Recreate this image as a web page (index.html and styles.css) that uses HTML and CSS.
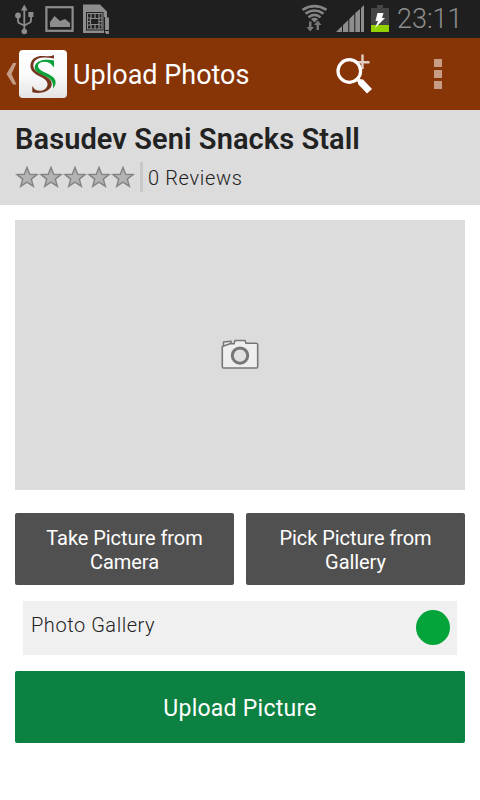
FILE: index.html
```
<!DOCTYPE html>
<html lang="en">
<head>
<meta charset="utf-8">
<title>Upload Photos</title>
<link rel="stylesheet" href="styles.css">
</head>
<body>
<div class="status">
  <svg class="status-left" width="120" height="38" viewBox="0 0 120 38">
    <g fill="none" stroke="#8d8d8d" stroke-width="1.8">
      <path d="M24.3 9V31M18 17V20.5Q18 23 20 23.5L24.3 25.5M31 16V20Q31 22.500 29 23L24.3 25.5"/>
      <rect x="46.4" y="7.200" width="26.200" height="23.600" stroke-width="2.2"/>
    </g>
    <g fill="#8d8d8d">
      <path d="M24.3 4.5L27.7 10.5H20.9z"/>
      <circle cx="18" cy="15.4" r="2.9"/>
      <rect x="28.400" y="12" width="5" height="5"/>
      <circle cx="24.3" cy="31.5" r="2.8"/>
      <path d="M50 27V22L54.5 16L60 21L65 19L70 23V27z"/>
      <path fill-rule="evenodd" d="M83 4.5H100L107 11.5V33H83zM86 12V30.5H103.500V12z"/>
      <path d="M106 17.500H109V30H106zM106 31H109V34H106z"/>
    </g>
    <g fill="none" stroke="#8d8d8d" stroke-width="1.2">
      <path d="M87.500 13.500H102V29H87.500zM90.500 18.500H99V24.500H90.500zM87.500 18H90.500M87.500 21.500H90.500M87.500 25H90.500M99 18H102M99 21.500H102M99 25H102M91 13.500V18M95 13.500V18M99 13.500V18M91 25V29M95 25V29M99 25V29"/>
    </g>
    <path d="M104.500 17V33M104.500 30.500H110" stroke="#1f1f1f" stroke-width="1"/>
  </svg>
  <svg class="status-right" width="92" height="38" viewBox="300 0 92 38">
    <g fill="none" stroke="#858585" stroke-width="2.6">
      <path d="M302.500 9.800Q314.500 2.500 326.500 9.800M305.500 13.600Q314.500 7.500 323.500 13.600M308.500 17.200Q314.500 12.500 320.500 17.200"/>
    </g>
    <path d="M311 19Q314.500 16.500 318 19L314.500 22.500z" fill="#858585"/>
    <path d="M309 21.500H311.500V27H314L310.200 31.500L306.500 27H309zM316.500 30H319V25H321.500L317.800 20.500L314 25H316.500z" fill="#777"/>
    <path d="M336 32L342 26V32zM343 25L348.300 20V32H343zM349.300 19L354.300 14V32H349.300zM355.300 13L360 9V32H355.300zM361 8L364 5V32H361z" fill="#8d8d8d"/>
    <path d="M377 5H383V8H389V32H371V8H377z" fill="#454545"/>
    <rect x="371" y="25" width="18" height="7" fill="#94d100"/>
    <path d="M377.500 13H383.500L382 18H385L375 28L378 21H375.500z" fill="#fff"/>
  </svg>
  <span class="clock">23:11</span>
</div>
<header class="bar">
  <svg class="back" width="11" height="24" viewBox="0 0 11 24"><path d="M7 1H10.500L5.500 12L10.500 22.500H7L0.500 12z" fill="#c49c84"/></svg>
  <svg class="logo" width="48" height="48" viewBox="0 0 48 48">
    <defs><linearGradient id="tile" x1="0" y1="0" x2="0" y2="1"><stop offset="0" stop-color="#fff"/><stop offset=".5" stop-color="#fbfbfb"/><stop offset="1" stop-color="#e4e4e4"/></linearGradient></defs>
    <rect width="48" height="48" rx="4" fill="url(#tile)"/>
    <path d="M35 5V8.500Q30 7.500 25 7.500C17 7.500 13.500 12 14.500 17C15.500 21 19 22.500 23 24.500C30 27.500 34 31 32.500 36C30 42 21 44 13.300 42.300V36L16 39.500C21 42.500 27.500 40 28.500 35C29 31 25 28.500 21 26.500C14 23 11 20 11.500 14.500C12.500 8 18 5.500 25 6Q31 7 35 5z" fill="#75361f"/>
    <path d="M35 10.500V17.500L32 14C28 10.500 20.500 11 19 15C18.500 19 23 21 27 23C35 26.500 38 30 36 35.500L34 38.500C35 31 31 28 24.500 25.500C18 22.500 14.500 20 16 15.500C18 10 27 8.500 35 10.500z" fill="#08a238"/>
  </svg>
  <h1 class="title">Upload Photos</h1>
  <svg class="search" width="38" height="40" viewBox="335 54 38 40">
    <g fill="none" stroke="#fff">
      <path d="M362.500 54.500V69M356 62.200H369.500" stroke="#e2cfc4" stroke-width="2.4"/>
      <circle cx="349.300" cy="71" r="11.300" stroke-width="3.200"/>
      <path d="M356.500 78L360 82" stroke-width="3.500"/>
    </g>
    <path d="M359 79L363 79.500L372 89L367 93.500L358 84z" fill="#fff"/>
  </svg>
  <svg class="more" width="8" height="30" viewBox="0 0 8 30"><path d="M0 0H8V8H0zM0 11H8V19H0zM0 22H8V30H0z" fill="#c79d86"/></svg>
</header>
<section class="place">
  <h2 class="name">Basudev Seni Snacks Stall</h2>
  <div class="rating">
    <svg class="stars" width="120" height="22" viewBox="0 0 120 22">
      <defs><path id="star" d="M12 1.500L14.700 8.200L22 8.600L16.300 13.100L18.300 20.200L12 16.200L5.700 20.200L7.700 13.100L2 8.600L9.300 8.200z" fill="#b3b3b3" stroke="#858585" stroke-width="1.500"/></defs>
      <use href="#star"/><use href="#star" x="24"/><use href="#star" x="48"/><use href="#star" x="72"/><use href="#star" x="96"/>
    </svg>
    <span class="reviews">0 Reviews</span>
  </div>
</section>
<main class="content">
  <div class="preview">
    <svg width="40" height="32" viewBox="220 338 40 32">
      <g fill="#eee" stroke="#777" stroke-width="1.600" stroke-linejoin="round">
        <path d="M223.500 346V342L231 341.300V344"/>
        <path d="M222.300 346.500L230 343.800H234L235 340.500H245L246 343.300H256.500Q257.700 343.300 257.700 345V366.500Q257.700 368 256.500 368H223.500Q222.300 368 222.300 366.500z"/>
        <circle cx="240" cy="355.600" r="7.700" fill="#e2e2e2" stroke-width="3"/>
      </g>
    </svg>
  </div>
  <div class="sources">
    <button class="btn">Take Picture from<br>Camera</button>
    <button class="btn">Pick Picture from<br>Gallery</button>
  </div>
  <div class="gallery"><span class="gallery-label">Photo Gallery</span><span class="dot"></span></div>
  <button class="btn upload">Upload Picture</button>
</main>
</body>
</html>
```
FILE: styles.css
```
* { box-sizing: border-box; }
body { margin: 0; width: 480px; height: 800px; background: #fff; color: #222; font-family: Roboto, sans-serif; overflow: hidden; }
svg { display: block; flex: none; }
h1, h2 { margin: 0; white-space: nowrap; }
.status { height: 38px; background: #1f1f1f; display: flex; align-items: center; }
.status-right { margin-left: 180px; }
.clock { margin-left: 5px; color: #8d8d8d; font-size: 27px; line-height: 38px; font-weight: 300; }
.bar { height: 72px; background: #873407; display: flex; align-items: center; padding-left: 6px; }
.logo { margin-left: 2px; }
.title { width: 262px; padding: 2px 0 0 6px; color: #fff; font-size: 27px; font-weight: 400; line-height: 36px; }
.search { margin-left: 6px; }
.more { margin-left: 61px; }
.place { height: 95px; background: #dcdcdc; padding: 11px 15px 0; }
.name { font-size: 29px; font-weight: 600; line-height: 36px; letter-spacing: 0.08px; }
.rating { display: flex; align-items: center; height: 40px; }
.reviews { margin-left: 5px; height: 30px; border-left: 3px solid #c8c8c8; padding-left: 5px; font-size: 20px; font-weight: 350; line-height: 33px; letter-spacing: 0.65px; }
.content { padding: 15px 15px 0; }
.preview { height: 270px; background: #dcdcdc; display: flex; align-items: center; justify-content: center; }
.preview svg { margin-top: -2px; }
.sources { display: grid; grid-template-columns: 1fr 1fr; gap: 12px; margin-top: 23px; }
.btn { height: 72px; border: 0; border-radius: 2px; padding: 2px 0 0; background: #505050; color: #fff; font: 400 20px/24px Roboto, sans-serif; letter-spacing: -0.06px; }
.gallery { margin: 16px 8px; height: 54px; background: #f0f0f0; display: flex; justify-content: space-between; padding: 0 7px 0 8px; }
.gallery-label { font-size: 20px; font-weight: 350; line-height: 48px; letter-spacing: 0.55px; }
.dot { width: 34px; height: 35px; margin-top: 9px; border-radius: 50%; background: #03a43a; }
.upload { display: block; width: 100%; padding-top: 3px; background: #0d8142; font-size: 23px; letter-spacing: 0.25px; }
```
